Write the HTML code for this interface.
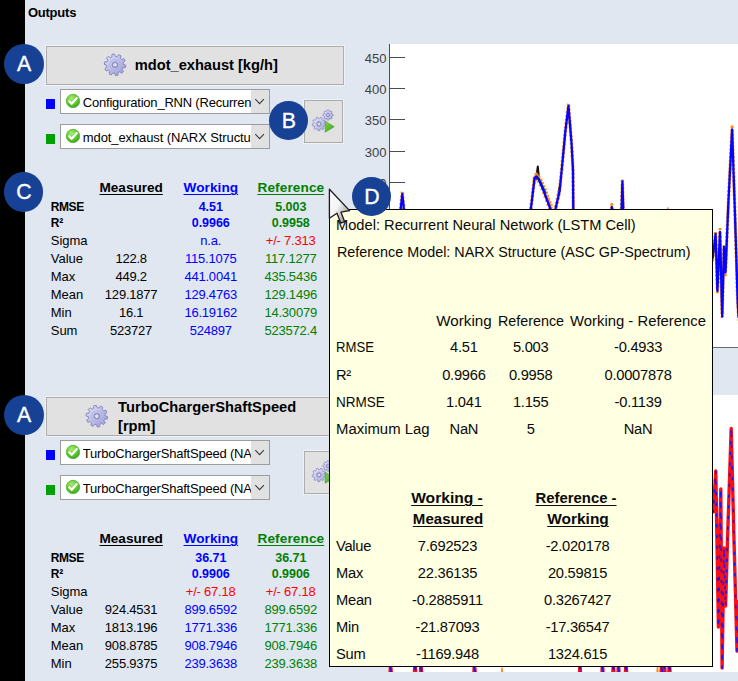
<!DOCTYPE html>
<html><head><meta charset="utf-8"><title>Outputs</title>
<style>
html,body{margin:0;padding:0;}
body{width:738px;height:681px;overflow:hidden;background:#fff;font-family:"Liberation Sans", sans-serif;position:relative;}
#panel{position:absolute;left:25px;top:0;width:713px;height:681px;background:#e0e7f1;}
.abs{position:absolute;}
.btn{position:absolute;box-sizing:border-box;background:#e1e1e1;border:1px solid #adadad;box-shadow:0 0 0 1px rgba(255,255,255,0.45);}
.combo{position:absolute;box-sizing:border-box;background:#fff;border:1px solid #9c9c9c;overflow:hidden;}
.combo .arr{position:absolute;right:0;top:0;width:18px;height:100%;background:#e1e1e1;}
.circle{position:absolute;border-radius:50%;background:#164194;color:#fff;text-align:center;font-weight:700;}
</style></head><body>
<div class="abs" style="left:0;top:0;width:25px;height:681px;background:#000;"></div>
<div id="panel"></div>

<div class="abs" style="left:390px;top:44px;width:348px;height:303px;background:#fff;"></div>
<div class="abs" style="left:389px;top:44px;width:1px;height:304px;background:#4d4d4d;"></div>
<div class="abs" style="left:389px;top:347px;width:349px;height:1px;background:#6a6a6a;"></div>
<div class="abs" style="left:388px;top:395px;width:350px;height:277px;background:#fff;"></div>
<div class="abs" style="left:390px;top:57px;width:15px;height:1px;background:#4d4d4d;"></div>
<div style="position:absolute;top:50px;font-size:13px;line-height:18px;color:#404040;white-space:pre;left:86.50px;width:300px;text-align:right;">450</div>
<div class="abs" style="left:390px;top:88px;width:15px;height:1px;background:#4d4d4d;"></div>
<div style="position:absolute;top:81px;font-size:13px;line-height:18px;color:#404040;white-space:pre;left:86.50px;width:300px;text-align:right;">400</div>
<div class="abs" style="left:390px;top:119px;width:15px;height:1px;background:#4d4d4d;"></div>
<div style="position:absolute;top:112px;font-size:13px;line-height:18px;color:#404040;white-space:pre;left:86.50px;width:300px;text-align:right;">350</div>
<div class="abs" style="left:390px;top:151px;width:15px;height:1px;background:#4d4d4d;"></div>
<div style="position:absolute;top:144px;font-size:13px;line-height:18px;color:#404040;white-space:pre;left:86.50px;width:300px;text-align:right;">300</div>
<div class="abs" style="left:390px;top:182px;width:15px;height:1px;background:#4d4d4d;"></div>
<div style="position:absolute;top:175px;font-size:13px;line-height:18px;color:#404040;white-space:pre;left:86.50px;width:300px;text-align:right;">250</div>
<div style="position:absolute;top:4px;font-size:13px;line-height:18px;color:#000;white-space:pre;font-weight:700;letter-spacing:-0.221px;left:27.90px;">Outputs</div>
<div class="btn" style="left:46px;top:46px;width:298px;height:39px;"></div>
<div class="combo" style="left:60px;top:89px;width:210px;height:25px;"><div class="arr"></div></div>
<div style="position:absolute;top:94px;font-size:13px;line-height:18px;color:#000;white-space:pre;letter-spacing:-0.21px;left:82.80px;width:168.2px;overflow:hidden;">Configuration_RNN (Recurrent</div>
<div class="combo" style="left:60px;top:124px;width:210px;height:25px;"><div class="arr"></div></div>
<div style="position:absolute;top:129px;font-size:13px;line-height:18px;color:#000;white-space:pre;letter-spacing:-0.1px;left:82.80px;width:168.2px;overflow:hidden;">mdot_exhaust (NARX Structure</div>
<div class="abs" style="left:46px;top:99px;width:9px;height:10px;background:#0000ff;"></div>
<div class="abs" style="left:46px;top:134px;width:9px;height:10px;background:#00a000;"></div>
<div class="btn" style="left:304px;top:100px;width:39px;height:43px;"></div>
<div class="btn" style="left:46px;top:397px;width:298px;height:39px;"></div>
<div class="combo" style="left:60px;top:440px;width:210px;height:25px;"><div class="arr"></div></div>
<div style="position:absolute;top:445px;font-size:13px;line-height:18px;color:#000;white-space:pre;letter-spacing:-0.21px;left:82.80px;width:168.2px;overflow:hidden;">TurboChargerShaftSpeed (NARX</div>
<div class="combo" style="left:60px;top:475px;width:210px;height:25px;"><div class="arr"></div></div>
<div style="position:absolute;top:480px;font-size:13px;line-height:18px;color:#000;white-space:pre;letter-spacing:-0.21px;left:82.80px;width:168.2px;overflow:hidden;">TurboChargerShaftSpeed (NARX</div>
<div class="abs" style="left:46px;top:450px;width:9px;height:10px;background:#0000ff;"></div>
<div class="abs" style="left:46px;top:485px;width:9px;height:10px;background:#00a000;"></div>
<div class="btn" style="left:304px;top:451px;width:39px;height:43px;"></div>
<div style="position:absolute;top:55px;font-size:14.67px;line-height:21px;color:#000;white-space:pre;font-weight:700;letter-spacing:-0.02px;left:134.80px;">mdot_exhaust [kg/h]</div>
<div style="position:absolute;top:397px;font-size:14.67px;line-height:21px;color:#000;white-space:pre;font-weight:700;letter-spacing:0.047px;left:118.00px;">TurboChargerShaftSpeed</div>
<div style="position:absolute;top:416px;font-size:14.67px;line-height:21px;color:#000;white-space:pre;font-weight:700;left:118.00px;">[rpm]</div>
<div style="position:absolute;top:178px;font-size:13.6px;line-height:19px;color:#000;white-space:pre;font-weight:700;letter-spacing:-0.013px;text-decoration:underline;text-decoration-thickness:1px;text-underline-offset:1.5px;left:-18.81px;width:300px;text-align:center;">Measured</div>
<div style="position:absolute;top:178px;font-size:13.6px;line-height:19px;color:#0000ff;white-space:pre;font-weight:700;letter-spacing:0.075px;text-decoration:underline;text-decoration-thickness:1px;text-underline-offset:1.5px;left:60.84px;width:300px;text-align:center;">Working</div>
<div style="position:absolute;top:178px;font-size:13.6px;line-height:19px;color:#008000;white-space:pre;font-weight:700;letter-spacing:0.116px;text-decoration:underline;text-decoration-thickness:1px;text-underline-offset:1.5px;left:140.86px;width:300px;text-align:center;">Reference</div>
<div style="position:absolute;top:199px;font-size:12px;line-height:17px;color:#000;white-space:pre;font-weight:700;letter-spacing:-0.423px;left:50.80px;">RMSE</div>
<div style="position:absolute;top:198px;font-size:12.5px;line-height:18px;color:#0000ff;white-space:pre;font-weight:700;letter-spacing:-0.05px;left:60.78px;width:300px;text-align:center;">4.51</div>
<div style="position:absolute;top:198px;font-size:12.5px;line-height:18px;color:#008000;white-space:pre;font-weight:700;letter-spacing:-0.05px;left:140.78px;width:300px;text-align:center;">5.003</div>
<div style="position:absolute;top:215px;font-size:12px;line-height:17px;color:#000;white-space:pre;font-weight:700;letter-spacing:-0.3px;left:50.80px;">R²</div>
<div style="position:absolute;top:214px;font-size:12.5px;line-height:18px;color:#0000ff;white-space:pre;font-weight:700;letter-spacing:-0.05px;left:60.78px;width:300px;text-align:center;">0.9966</div>
<div style="position:absolute;top:214px;font-size:12.5px;line-height:18px;color:#008000;white-space:pre;font-weight:700;letter-spacing:-0.05px;left:140.78px;width:300px;text-align:center;">0.9958</div>
<div style="position:absolute;top:232px;font-size:13px;line-height:18px;color:#000;white-space:pre;letter-spacing:-0.05px;left:50.80px;">Sigma</div>
<div style="position:absolute;top:232px;font-size:13px;line-height:18px;color:#0000ff;white-space:pre;letter-spacing:-0.22px;left:60.69px;width:300px;text-align:center;">n.a.</div>
<div style="position:absolute;top:232px;font-size:13px;line-height:18px;color:#ff0000;white-space:pre;letter-spacing:-0.22px;left:140.69px;width:300px;text-align:center;">+/- 7.313</div>
<div style="position:absolute;top:250px;font-size:13px;line-height:18px;color:#000;white-space:pre;letter-spacing:-0.05px;left:50.80px;">Value</div>
<div style="position:absolute;top:250px;font-size:13px;line-height:18px;color:#000;white-space:pre;letter-spacing:-0.22px;left:-18.91px;width:300px;text-align:center;">122.8</div>
<div style="position:absolute;top:250px;font-size:13px;line-height:18px;color:#0000ff;white-space:pre;letter-spacing:-0.22px;left:60.69px;width:300px;text-align:center;">115.1075</div>
<div style="position:absolute;top:250px;font-size:13px;line-height:18px;color:#008000;white-space:pre;letter-spacing:-0.22px;left:140.69px;width:300px;text-align:center;">117.1277</div>
<div style="position:absolute;top:268px;font-size:13px;line-height:18px;color:#000;white-space:pre;letter-spacing:-0.05px;left:50.80px;">Max</div>
<div style="position:absolute;top:268px;font-size:13px;line-height:18px;color:#000;white-space:pre;letter-spacing:-0.22px;left:-18.91px;width:300px;text-align:center;">449.2</div>
<div style="position:absolute;top:268px;font-size:13px;line-height:18px;color:#0000ff;white-space:pre;letter-spacing:-0.22px;left:60.69px;width:300px;text-align:center;">441.0041</div>
<div style="position:absolute;top:268px;font-size:13px;line-height:18px;color:#008000;white-space:pre;letter-spacing:-0.22px;left:140.69px;width:300px;text-align:center;">435.5436</div>
<div style="position:absolute;top:286px;font-size:13px;line-height:18px;color:#000;white-space:pre;letter-spacing:-0.05px;left:50.80px;">Mean</div>
<div style="position:absolute;top:286px;font-size:13px;line-height:18px;color:#000;white-space:pre;letter-spacing:-0.22px;left:-18.91px;width:300px;text-align:center;">129.1877</div>
<div style="position:absolute;top:286px;font-size:13px;line-height:18px;color:#0000ff;white-space:pre;letter-spacing:-0.22px;left:60.69px;width:300px;text-align:center;">129.4763</div>
<div style="position:absolute;top:286px;font-size:13px;line-height:18px;color:#008000;white-space:pre;letter-spacing:-0.22px;left:140.69px;width:300px;text-align:center;">129.1496</div>
<div style="position:absolute;top:304px;font-size:13px;line-height:18px;color:#000;white-space:pre;letter-spacing:-0.05px;left:50.80px;">Min</div>
<div style="position:absolute;top:304px;font-size:13px;line-height:18px;color:#000;white-space:pre;letter-spacing:-0.22px;left:-18.91px;width:300px;text-align:center;">16.1</div>
<div style="position:absolute;top:304px;font-size:13px;line-height:18px;color:#0000ff;white-space:pre;letter-spacing:-0.22px;left:60.69px;width:300px;text-align:center;">16.19162</div>
<div style="position:absolute;top:304px;font-size:13px;line-height:18px;color:#008000;white-space:pre;letter-spacing:-0.22px;left:140.69px;width:300px;text-align:center;">14.30079</div>
<div style="position:absolute;top:322px;font-size:13px;line-height:18px;color:#000;white-space:pre;letter-spacing:-0.05px;left:50.80px;">Sum</div>
<div style="position:absolute;top:322px;font-size:13px;line-height:18px;color:#000;white-space:pre;letter-spacing:-0.22px;left:-18.91px;width:300px;text-align:center;">523727</div>
<div style="position:absolute;top:322px;font-size:13px;line-height:18px;color:#0000ff;white-space:pre;letter-spacing:-0.22px;left:60.69px;width:300px;text-align:center;">524897</div>
<div style="position:absolute;top:322px;font-size:13px;line-height:18px;color:#008000;white-space:pre;letter-spacing:-0.22px;left:140.69px;width:300px;text-align:center;">523572.4</div>
<div style="position:absolute;top:529px;font-size:13.6px;line-height:19px;color:#000;white-space:pre;font-weight:700;letter-spacing:-0.013px;text-decoration:underline;text-decoration-thickness:1px;text-underline-offset:1.5px;left:-18.81px;width:300px;text-align:center;">Measured</div>
<div style="position:absolute;top:529px;font-size:13.6px;line-height:19px;color:#0000ff;white-space:pre;font-weight:700;letter-spacing:0.075px;text-decoration:underline;text-decoration-thickness:1px;text-underline-offset:1.5px;left:60.84px;width:300px;text-align:center;">Working</div>
<div style="position:absolute;top:529px;font-size:13.6px;line-height:19px;color:#008000;white-space:pre;font-weight:700;letter-spacing:0.116px;text-decoration:underline;text-decoration-thickness:1px;text-underline-offset:1.5px;left:140.86px;width:300px;text-align:center;">Reference</div>
<div style="position:absolute;top:550px;font-size:12px;line-height:17px;color:#000;white-space:pre;font-weight:700;letter-spacing:-0.423px;left:50.80px;">RMSE</div>
<div style="position:absolute;top:549px;font-size:12.5px;line-height:18px;color:#0000ff;white-space:pre;font-weight:700;letter-spacing:-0.05px;left:60.78px;width:300px;text-align:center;">36.71</div>
<div style="position:absolute;top:549px;font-size:12.5px;line-height:18px;color:#008000;white-space:pre;font-weight:700;letter-spacing:-0.05px;left:140.78px;width:300px;text-align:center;">36.71</div>
<div style="position:absolute;top:566px;font-size:12px;line-height:17px;color:#000;white-space:pre;font-weight:700;letter-spacing:-0.3px;left:50.80px;">R²</div>
<div style="position:absolute;top:565px;font-size:12.5px;line-height:18px;color:#0000ff;white-space:pre;font-weight:700;letter-spacing:-0.05px;left:60.78px;width:300px;text-align:center;">0.9906</div>
<div style="position:absolute;top:565px;font-size:12.5px;line-height:18px;color:#008000;white-space:pre;font-weight:700;letter-spacing:-0.05px;left:140.78px;width:300px;text-align:center;">0.9906</div>
<div style="position:absolute;top:583px;font-size:13px;line-height:18px;color:#000;white-space:pre;letter-spacing:-0.05px;left:50.80px;">Sigma</div>
<div style="position:absolute;top:583px;font-size:13px;line-height:18px;color:#ff0000;white-space:pre;letter-spacing:-0.22px;left:60.69px;width:300px;text-align:center;">+/- 67.18</div>
<div style="position:absolute;top:583px;font-size:13px;line-height:18px;color:#ff0000;white-space:pre;letter-spacing:-0.22px;left:140.69px;width:300px;text-align:center;">+/- 67.18</div>
<div style="position:absolute;top:601px;font-size:13px;line-height:18px;color:#000;white-space:pre;letter-spacing:-0.05px;left:50.80px;">Value</div>
<div style="position:absolute;top:601px;font-size:13px;line-height:18px;color:#000;white-space:pre;letter-spacing:-0.22px;left:-18.91px;width:300px;text-align:center;">924.4531</div>
<div style="position:absolute;top:601px;font-size:13px;line-height:18px;color:#0000ff;white-space:pre;letter-spacing:-0.22px;left:60.69px;width:300px;text-align:center;">899.6592</div>
<div style="position:absolute;top:601px;font-size:13px;line-height:18px;color:#008000;white-space:pre;letter-spacing:-0.22px;left:140.69px;width:300px;text-align:center;">899.6592</div>
<div style="position:absolute;top:619px;font-size:13px;line-height:18px;color:#000;white-space:pre;letter-spacing:-0.05px;left:50.80px;">Max</div>
<div style="position:absolute;top:619px;font-size:13px;line-height:18px;color:#000;white-space:pre;letter-spacing:-0.22px;left:-18.91px;width:300px;text-align:center;">1813.196</div>
<div style="position:absolute;top:619px;font-size:13px;line-height:18px;color:#0000ff;white-space:pre;letter-spacing:-0.22px;left:60.69px;width:300px;text-align:center;">1771.336</div>
<div style="position:absolute;top:619px;font-size:13px;line-height:18px;color:#008000;white-space:pre;letter-spacing:-0.22px;left:140.69px;width:300px;text-align:center;">1771.336</div>
<div style="position:absolute;top:637px;font-size:13px;line-height:18px;color:#000;white-space:pre;letter-spacing:-0.05px;left:50.80px;">Mean</div>
<div style="position:absolute;top:637px;font-size:13px;line-height:18px;color:#000;white-space:pre;letter-spacing:-0.22px;left:-18.91px;width:300px;text-align:center;">908.8785</div>
<div style="position:absolute;top:637px;font-size:13px;line-height:18px;color:#0000ff;white-space:pre;letter-spacing:-0.22px;left:60.69px;width:300px;text-align:center;">908.7946</div>
<div style="position:absolute;top:637px;font-size:13px;line-height:18px;color:#008000;white-space:pre;letter-spacing:-0.22px;left:140.69px;width:300px;text-align:center;">908.7946</div>
<div style="position:absolute;top:655px;font-size:13px;line-height:18px;color:#000;white-space:pre;letter-spacing:-0.05px;left:50.80px;">Min</div>
<div style="position:absolute;top:655px;font-size:13px;line-height:18px;color:#000;white-space:pre;letter-spacing:-0.22px;left:-18.91px;width:300px;text-align:center;">255.9375</div>
<div style="position:absolute;top:655px;font-size:13px;line-height:18px;color:#0000ff;white-space:pre;letter-spacing:-0.22px;left:60.69px;width:300px;text-align:center;">239.3638</div>
<div style="position:absolute;top:655px;font-size:13px;line-height:18px;color:#008000;white-space:pre;letter-spacing:-0.22px;left:140.69px;width:300px;text-align:center;">239.3638</div>
<svg class="abs" style="left:0;top:0" width="738" height="681" viewBox="0 0 738 681">
<defs>
<linearGradient id="gg" x1="0" y1="0" x2="1" y2="1"><stop offset="0" stop-color="#e4e4f7"/><stop offset="0.5" stop-color="#bdbde7"/><stop offset="1" stop-color="#9797d0"/></linearGradient>
<linearGradient id="gg2" x1="0" y1="0" x2="1" y2="1"><stop offset="0" stop-color="#f6f6fd"/><stop offset="0.5" stop-color="#cfcfee"/><stop offset="1" stop-color="#a6a6da"/></linearGradient>
<radialGradient id="cg" cx="0.4" cy="0.3" r="0.8"><stop offset="0" stop-color="#a6ec6e"/><stop offset="0.55" stop-color="#5fc832"/><stop offset="1" stop-color="#359a20"/></radialGradient>
<linearGradient id="tg" x1="0" y1="0" x2="1" y2="1"><stop offset="0" stop-color="#7fd84a"/><stop offset="1" stop-color="#3c9e1e"/></linearGradient>
<linearGradient id="cur" x1="0" y1="0" x2="1" y2="1"><stop offset="0" stop-color="#ffffff"/><stop offset="0.45" stop-color="#f4f4f4"/><stop offset="1" stop-color="#7c7c7c"/></linearGradient>
<clipPath id="c1"><rect x="390" y="44" width="348" height="303"/></clipPath>
<clipPath id="c2"><rect x="388" y="395" width="350" height="277"/></clipPath>
</defs>
<g clip-path="url(#c1)" fill="none" stroke-linejoin="round">
<path d="M536,180 L537.8,166.5 L539.3,181" stroke="#111" stroke-width="2"/>
<path d="M558.2,196 L559,187 L560,192" stroke="#111" stroke-width="1.6"/>
<path d="M400.2,215 L401,206 L402.3,194 L403.6,206 L404.2,215" stroke="#ff8c1a" stroke-width="3.2" stroke-dasharray="1.8 2.0" transform="translate(0,-2.6)"/>
<path d="M400.2,215 L401,206 L402.3,194 L403.6,206 L404.2,215" stroke="#ff8c1a" stroke-width="3.0" stroke-dasharray="1.6 2.6" transform="translate(0,2.4)"/>
<path d="M529.8,215 L531,208 L534.6,178 L536.5,176.5 L539,180 L543.7,191 L550.8,210 L553,215 L555.3,210 L559.6,191 L562,167 L565.5,130 L568.5,106 L571.5,143 L573,170 L573.3,215" stroke="#ff8c1a" stroke-width="3.2" stroke-dasharray="1.8 2.0" transform="translate(0,-2.6)"/>
<path d="M529.8,215 L531,208 L534.6,178 L536.5,176.5 L539,180 L543.7,191 L550.8,210 L553,215 L555.3,210 L559.6,191 L562,167 L565.5,130 L568.5,106 L571.5,143 L573,170 L573.3,215" stroke="#ff8c1a" stroke-width="3.0" stroke-dasharray="1.6 2.6" transform="translate(0,2.4)"/>
<path d="M611,215 L611.8,207 L612.6,215" stroke="#ff8c1a" stroke-width="3.2" stroke-dasharray="1.8 2.0" transform="translate(0,-2.6)"/>
<path d="M611,215 L611.8,207 L612.6,215" stroke="#ff8c1a" stroke-width="3.0" stroke-dasharray="1.6 2.6" transform="translate(0,2.4)"/>
<path d="M621.4,215 L622.4,181.5 L623.4,215" stroke="#ff8c1a" stroke-width="3.2" stroke-dasharray="1.8 2.0" transform="translate(0,-2.6)"/>
<path d="M621.4,215 L622.4,181.5 L623.4,215" stroke="#ff8c1a" stroke-width="3.0" stroke-dasharray="1.6 2.6" transform="translate(0,2.4)"/>
<path d="M709,250 L712.7,258 L715.6,234 L717.4,291 L720,232 L722.2,316.5 L724,247 L725.5,272.5 L728.5,200 L732.1,129.5 L735,215 L737.6,300 L738.6,318" stroke="#ff8c1a" stroke-width="3.2" stroke-dasharray="1.8 2.0" transform="translate(0,-2.6)"/>
<path d="M709,250 L712.7,258 L715.6,234 L717.4,291 L720,232 L722.2,316.5 L724,247 L725.5,272.5 L728.5,200 L732.1,129.5 L735,215 L737.6,300 L738.6,318" stroke="#ff8c1a" stroke-width="3.0" stroke-dasharray="1.6 2.6" transform="translate(0,2.4)"/>
<path d="M533.5,180 L536.5,174 L540.5,178.5 L545.5,189.5 L552,207" stroke="#ff8c1a" stroke-width="2.6" stroke-dasharray="1.8 1.6"/>
<path d="M535,179 L537.5,177 L541,182 L546,193" stroke="#1a7a1a" stroke-width="1.4"/>
<circle cx="667.8" cy="208.3" r="1" fill="#ff8c1a"/>
<path d="M400.2,215 L401,206 L402.3,194 L403.6,206 L404.2,215" stroke="#0404ff" stroke-width="2.3"/>
<path d="M529.8,215 L531,208 L534.6,178 L536.5,176.5 L539,180 L543.7,191 L550.8,210 L553,215 L555.3,210 L559.6,191 L562,167 L565.5,130 L568.5,106 L571.5,143 L573,170 L573.3,215" stroke="#0404ff" stroke-width="2.3"/>
<path d="M611,215 L611.8,207 L612.6,215" stroke="#0404ff" stroke-width="2.3"/>
<path d="M621.4,215 L622.4,181.5 L623.4,215" stroke="#0404ff" stroke-width="2.3"/>
<path d="M709,250 L712.7,258 L715.6,234 L717.4,291 L720,232 L722.2,316.5 L724,247 L725.5,272.5 L728.5,200 L732.1,129.5 L735,215 L737.6,300 L738.6,318" stroke="#0404ff" stroke-width="2.3"/>
</g>
<g clip-path="url(#c2)" fill="none" stroke-linejoin="round">
<path d="M501.3,680 L502,668 L502.8,680 M656.5,680 L657.5,666 L658.5,680" stroke="#ff8c1a" stroke-width="1.5"/>
<path d="M709,500 L713.2,512 L715.8,471 L718.4,627 L720.8,489 L722.1,668 L724,548 L725.6,606 L727.5,540 L731.2,428.5 L734,540 L737,651 L739,600" stroke="#f5101a" stroke-width="3.4"/>
<path d="M389.5,680 L390.6,664 L391.8,680" stroke="#f5101a" stroke-width="3.4"/>
<path d="M414,680 L415,663 L416.3,680" stroke="#f5101a" stroke-width="3.4"/>
<path d="M420,680 L421,664 L422.2,680" stroke="#f5101a" stroke-width="3.4"/>
<path d="M473.3,680 L474.5,664 L475.8,680" stroke="#f5101a" stroke-width="3.4"/>
<path d="M579,680 L580,665 L581,680" stroke="#f5101a" stroke-width="3.4"/>
<path d="M601.5,680 L602.5,664 L603.5,680" stroke="#f5101a" stroke-width="3.4"/>
<path d="M612.4,680 L613.4,663 L614.4,680" stroke="#f5101a" stroke-width="3.4"/>
<path d="M617.5,680 L618.5,664 L619.5,680" stroke="#f5101a" stroke-width="3.4"/>
<path d="M625,680 L626,663 L627.2,680" stroke="#f5101a" stroke-width="3.4"/>
<path d="M660.5,680 L661.7,664 L663,680" stroke="#f5101a" stroke-width="3.4"/>
<path d="M663.6,680 L664.6,665 L665.6,680" stroke="#f5101a" stroke-width="3.4"/>
<path d="M668.3,680 L669.4,663 L670.6,680" stroke="#f5101a" stroke-width="3.4"/>
<path d="M709,500 L713.2,512 L715.8,471 L718.4,627 L720.8,489 L722.1,668 L724,548 L725.6,606 L727.5,540 L731.2,428.5 L734,540 L737,651 L739,600" stroke="#1414ff" stroke-width="1.6" stroke-dasharray="3.2 7.5"/>
<path d="M389.5,680 L390.6,664 L391.8,680" stroke="#1414ff" stroke-width="1.6" stroke-dasharray="3.2 7.5"/>
<path d="M414,680 L415,663 L416.3,680" stroke="#1414ff" stroke-width="1.6" stroke-dasharray="3.2 7.5"/>
<path d="M420,680 L421,664 L422.2,680" stroke="#1414ff" stroke-width="1.6" stroke-dasharray="3.2 7.5"/>
<path d="M473.3,680 L474.5,664 L475.8,680" stroke="#1414ff" stroke-width="1.6" stroke-dasharray="3.2 7.5"/>
<path d="M579,680 L580,665 L581,680" stroke="#1414ff" stroke-width="1.6" stroke-dasharray="3.2 7.5"/>
<path d="M601.5,680 L602.5,664 L603.5,680" stroke="#1414ff" stroke-width="1.6" stroke-dasharray="3.2 7.5"/>
<path d="M612.4,680 L613.4,663 L614.4,680" stroke="#1414ff" stroke-width="1.6" stroke-dasharray="3.2 7.5"/>
<path d="M617.5,680 L618.5,664 L619.5,680" stroke="#1414ff" stroke-width="1.6" stroke-dasharray="3.2 7.5"/>
<path d="M625,680 L626,663 L627.2,680" stroke="#1414ff" stroke-width="1.6" stroke-dasharray="3.2 7.5"/>
<path d="M660.5,680 L661.7,664 L663,680" stroke="#1414ff" stroke-width="1.6" stroke-dasharray="3.2 7.5"/>
<path d="M663.6,680 L664.6,665 L665.6,680" stroke="#1414ff" stroke-width="1.6" stroke-dasharray="3.2 7.5"/>
<path d="M668.3,680 L669.4,663 L670.6,680" stroke="#1414ff" stroke-width="1.6" stroke-dasharray="3.2 7.5"/>
</g>
<path d="M123.39,64.32 L125.79,65.13 L125.41,67.67 L122.87,67.74 L122.07,69.34 L123.54,71.41 L121.73,73.24 L119.64,71.80 L118.05,72.63 L118.02,75.17 L115.48,75.59 L114.64,73.19 L112.87,72.92 L111.35,74.96 L109.05,73.81 L109.77,71.38 L108.50,70.12 L106.07,70.88 L104.89,68.59 L106.91,67.05 L106.61,65.28 L104.21,64.47 L104.59,61.93 L107.13,61.86 L107.93,60.26 L106.46,58.19 L108.27,56.36 L110.36,57.80 L111.95,56.97 L111.98,54.43 L114.52,54.01 L115.36,56.41 L117.13,56.68 L118.65,54.64 L120.95,55.79 L120.23,58.22 L121.50,59.48 L123.93,58.72 L125.11,61.01 L123.09,62.55Z M117.40,64.80 A2.4,2.4 0 1,0 112.60,64.80 A2.4,2.4 0 1,0 117.40,64.80Z" fill="url(#gg)" fill-rule="evenodd" stroke="#8888c6" stroke-width="1.0" stroke-linejoin="round"/><circle cx="115" cy="64.8" r="5.21" fill="none" stroke="#b4b4e2" stroke-width="1.10" opacity="0.9"/><circle cx="115" cy="64.8" r="2.80" fill="none" stroke="#8f8fcc" stroke-width="1.0"/>
<path d="M105.19,415.72 L107.59,416.53 L107.21,419.07 L104.67,419.14 L103.87,420.74 L105.34,422.81 L103.53,424.64 L101.44,423.20 L99.85,424.03 L99.82,426.57 L97.28,426.99 L96.44,424.59 L94.67,424.32 L93.15,426.36 L90.85,425.21 L91.57,422.78 L90.30,421.52 L87.87,422.28 L86.69,419.99 L88.71,418.45 L88.41,416.68 L86.01,415.87 L86.39,413.33 L88.93,413.26 L89.73,411.66 L88.26,409.59 L90.07,407.76 L92.16,409.20 L93.75,408.37 L93.78,405.83 L96.32,405.41 L97.16,407.81 L98.93,408.08 L100.45,406.04 L102.75,407.19 L102.03,409.62 L103.30,410.88 L105.73,410.12 L106.91,412.41 L104.89,413.95Z M99.20,416.20 A2.4,2.4 0 1,0 94.40,416.20 A2.4,2.4 0 1,0 99.20,416.20Z" fill="url(#gg)" fill-rule="evenodd" stroke="#8888c6" stroke-width="1.0" stroke-linejoin="round"/><circle cx="96.8" cy="416.2" r="5.21" fill="none" stroke="#b4b4e2" stroke-width="1.10" opacity="0.9"/><circle cx="96.8" cy="416.2" r="2.80" fill="none" stroke="#8f8fcc" stroke-width="1.0"/>
<circle cx="73" cy="101" r="6.7" fill="url(#cg)" stroke="#52b030" stroke-width="0.8"/><path d="M69.30,101.30 L71.70,103.80 L76.80,98.10" fill="none" stroke="#fff" stroke-width="2.2" stroke-linecap="round" stroke-linejoin="round"/>
<circle cx="73" cy="136" r="6.7" fill="url(#cg)" stroke="#52b030" stroke-width="0.8"/><path d="M69.30,136.30 L71.70,138.80 L76.80,133.10" fill="none" stroke="#fff" stroke-width="2.2" stroke-linecap="round" stroke-linejoin="round"/>
<circle cx="73" cy="452" r="6.7" fill="url(#cg)" stroke="#52b030" stroke-width="0.8"/><path d="M69.30,452.30 L71.70,454.80 L76.80,449.10" fill="none" stroke="#fff" stroke-width="2.2" stroke-linecap="round" stroke-linejoin="round"/>
<circle cx="73" cy="487" r="6.7" fill="url(#cg)" stroke="#52b030" stroke-width="0.8"/><path d="M69.30,487.30 L71.70,489.80 L76.80,484.10" fill="none" stroke="#fff" stroke-width="2.2" stroke-linecap="round" stroke-linejoin="round"/>
<path d="M255.3,99.2 L259.6,103.7 L263.9,99.2" fill="none" stroke="#3c3c3c" stroke-width="1.1"/>
<path d="M255.3,134.2 L259.6,138.7 L263.9,134.2" fill="none" stroke="#3c3c3c" stroke-width="1.1"/>
<path d="M255.3,450.2 L259.6,454.7 L263.9,450.2" fill="none" stroke="#3c3c3c" stroke-width="1.1"/>
<path d="M255.3,485.2 L259.6,489.7 L263.9,485.2" fill="none" stroke="#3c3c3c" stroke-width="1.1"/>
<path d="M331.77,114.00 L333.14,114.23 L333.14,115.77 L331.77,116.00 L331.37,116.96 L332.18,118.09 L331.09,119.18 L329.96,118.37 L329.00,118.77 L328.77,120.14 L327.23,120.14 L327.00,118.77 L326.04,118.37 L324.91,119.18 L323.82,118.09 L324.63,116.96 L324.23,116.00 L322.86,115.77 L322.86,114.23 L324.23,114.00 L324.63,113.04 L323.82,111.91 L324.91,110.82 L326.04,111.63 L327.00,111.23 L327.23,109.86 L328.77,109.86 L329.00,111.23 L329.96,111.63 L331.09,110.82 L332.18,111.91 L331.37,113.04Z M329.40,115.00 A1.4,1.4 0 1,0 326.60,115.00 A1.4,1.4 0 1,0 329.40,115.00Z" fill="url(#gg2)" fill-rule="evenodd" stroke="#8888c6" stroke-width="0.8" stroke-linejoin="round"/><circle cx="328.0" cy="115" r="2.42" fill="none" stroke="#b4b4e2" stroke-width="0.88" opacity="0.9"/><circle cx="328.0" cy="115" r="1.80" fill="none" stroke="#8f8fcc" stroke-width="0.8"/>
<path d="M324.10,123.75 L325.78,124.36 L325.43,126.12 L323.63,126.03 L323.00,127.06 L323.90,128.61 L322.50,129.73 L321.18,128.51 L320.04,128.89 L319.73,130.66 L317.93,130.62 L317.71,128.83 L316.59,128.39 L315.21,129.55 L313.86,128.36 L314.84,126.85 L314.26,125.79 L312.47,125.79 L312.20,124.01 L313.92,123.49 L314.16,122.30 L312.78,121.15 L313.72,119.62 L315.37,120.32 L316.32,119.56 L316.00,117.80 L317.71,117.22 L318.53,118.82 L319.73,118.85 L320.63,117.30 L322.30,117.96 L321.90,119.70 L322.81,120.50 L324.49,119.89 L325.35,121.47 L323.92,122.55Z M320.80,123.90 A1.8,1.8 0 1,0 317.20,123.90 A1.8,1.8 0 1,0 320.80,123.90Z" fill="url(#gg2)" fill-rule="evenodd" stroke="#8888c6" stroke-width="0.8" stroke-linejoin="round"/><circle cx="319.0" cy="123.9" r="3.16" fill="none" stroke="#b4b4e2" stroke-width="0.88" opacity="0.9"/><circle cx="319.0" cy="123.9" r="2.20" fill="none" stroke="#8f8fcc" stroke-width="0.8"/>
<path d="M325.2,121.2 L334.2,126.7 L325.2,132.2Z" fill="url(#tg)" stroke="#3d9a22" stroke-width="0.6"/>
<path d="M331.77,465.00 L333.14,465.23 L333.14,466.77 L331.77,467.00 L331.37,467.96 L332.18,469.09 L331.09,470.18 L329.96,469.37 L329.00,469.77 L328.77,471.14 L327.23,471.14 L327.00,469.77 L326.04,469.37 L324.91,470.18 L323.82,469.09 L324.63,467.96 L324.23,467.00 L322.86,466.77 L322.86,465.23 L324.23,465.00 L324.63,464.04 L323.82,462.91 L324.91,461.82 L326.04,462.63 L327.00,462.23 L327.23,460.86 L328.77,460.86 L329.00,462.23 L329.96,462.63 L331.09,461.82 L332.18,462.91 L331.37,464.04Z M329.40,466.00 A1.4,1.4 0 1,0 326.60,466.00 A1.4,1.4 0 1,0 329.40,466.00Z" fill="url(#gg2)" fill-rule="evenodd" stroke="#8888c6" stroke-width="0.8" stroke-linejoin="round"/><circle cx="328.0" cy="466" r="2.42" fill="none" stroke="#b4b4e2" stroke-width="0.88" opacity="0.9"/><circle cx="328.0" cy="466" r="1.80" fill="none" stroke="#8f8fcc" stroke-width="0.8"/>
<path d="M324.10,474.75 L325.78,475.36 L325.43,477.12 L323.63,477.03 L323.00,478.06 L323.90,479.61 L322.50,480.73 L321.18,479.51 L320.04,479.89 L319.73,481.66 L317.93,481.62 L317.71,479.83 L316.59,479.39 L315.21,480.55 L313.86,479.36 L314.84,477.85 L314.26,476.79 L312.47,476.79 L312.20,475.01 L313.92,474.49 L314.16,473.30 L312.78,472.15 L313.72,470.62 L315.37,471.32 L316.32,470.56 L316.00,468.80 L317.71,468.22 L318.53,469.82 L319.73,469.85 L320.63,468.30 L322.30,468.96 L321.90,470.70 L322.81,471.50 L324.49,470.89 L325.35,472.47 L323.92,473.55Z M320.80,474.90 A1.8,1.8 0 1,0 317.20,474.90 A1.8,1.8 0 1,0 320.80,474.90Z" fill="url(#gg2)" fill-rule="evenodd" stroke="#8888c6" stroke-width="0.8" stroke-linejoin="round"/><circle cx="319.0" cy="474.9" r="3.16" fill="none" stroke="#b4b4e2" stroke-width="0.88" opacity="0.9"/><circle cx="319.0" cy="474.9" r="2.20" fill="none" stroke="#8f8fcc" stroke-width="0.8"/>
<path d="M325.2,472.2 L334.2,477.7 L325.2,483.2Z" fill="url(#tg)" stroke="#3d9a22" stroke-width="0.6"/>
</svg>
<div class="abs" style="left:329px;top:209px;width:384px;height:458px;box-sizing:border-box;background:#ffffe1;border:1px solid #000;"></div>
<div style="position:absolute;top:215px;font-size:14.7px;line-height:21px;color:#0a0a0a;white-space:pre;left:336.20px;transform:scaleX(0.9976);transform-origin:0 0;">Model: Recurrent Neural Network (LSTM Cell)</div>
<div style="position:absolute;top:242px;font-size:14.7px;line-height:21px;color:#0a0a0a;white-space:pre;left:336.60px;transform:scaleX(0.9776);transform-origin:0 0;">Reference Model: NARX Structure (ASC GP-Spectrum)</div>
<div style="position:absolute;top:311px;font-size:14.7px;line-height:21px;color:#0a0a0a;white-space:pre;left:314.00px;width:300px;text-align:center;transform:scaleX(1.0327);transform-origin:50% 0;">Working</div>
<div style="position:absolute;top:311px;font-size:14.7px;line-height:21px;color:#0a0a0a;white-space:pre;left:380.80px;width:300px;text-align:center;transform:scaleX(0.9761);transform-origin:50% 0;">Reference</div>
<div style="position:absolute;top:311px;font-size:14.7px;line-height:21px;color:#0a0a0a;white-space:pre;left:488.20px;width:300px;text-align:center;transform:scaleX(1.0109);transform-origin:50% 0;">Working - Reference</div>
<div style="position:absolute;top:337px;font-size:14.7px;line-height:21px;color:#0a0a0a;white-space:pre;left:336.10px;transform:scaleX(0.8947);transform-origin:0 0;">RMSE</div>
<div style="position:absolute;top:337px;font-size:14.7px;line-height:21px;color:#0a0a0a;white-space:pre;letter-spacing:-0.25px;left:313.88px;width:300px;text-align:center;">4.51</div>
<div style="position:absolute;top:337px;font-size:14.7px;line-height:21px;color:#0a0a0a;white-space:pre;letter-spacing:-0.25px;left:380.67px;width:300px;text-align:center;">5.003</div>
<div style="position:absolute;top:337px;font-size:14.7px;line-height:21px;color:#0a0a0a;white-space:pre;letter-spacing:-0.25px;left:488.08px;width:300px;text-align:center;">-0.4933</div>
<div style="position:absolute;top:365px;font-size:14.7px;line-height:21px;color:#0a0a0a;white-space:pre;letter-spacing:-0.5px;left:336.10px;">R²</div>
<div style="position:absolute;top:365px;font-size:14.7px;line-height:21px;color:#0a0a0a;white-space:pre;letter-spacing:-0.25px;left:313.88px;width:300px;text-align:center;">0.9966</div>
<div style="position:absolute;top:365px;font-size:14.7px;line-height:21px;color:#0a0a0a;white-space:pre;letter-spacing:-0.25px;left:380.67px;width:300px;text-align:center;">0.9958</div>
<div style="position:absolute;top:365px;font-size:14.7px;line-height:21px;color:#0a0a0a;white-space:pre;letter-spacing:-0.25px;left:488.08px;width:300px;text-align:center;">0.0007878</div>
<div style="position:absolute;top:392px;font-size:14.7px;line-height:21px;color:#0a0a0a;white-space:pre;left:336.10px;transform:scaleX(0.9211);transform-origin:0 0;">NRMSE</div>
<div style="position:absolute;top:392px;font-size:14.7px;line-height:21px;color:#0a0a0a;white-space:pre;letter-spacing:-0.25px;left:313.88px;width:300px;text-align:center;">1.041</div>
<div style="position:absolute;top:392px;font-size:14.7px;line-height:21px;color:#0a0a0a;white-space:pre;letter-spacing:-0.25px;left:380.67px;width:300px;text-align:center;">1.155</div>
<div style="position:absolute;top:392px;font-size:14.7px;line-height:21px;color:#0a0a0a;white-space:pre;letter-spacing:-0.25px;left:488.08px;width:300px;text-align:center;">-0.1139</div>
<div style="position:absolute;top:419px;font-size:14.7px;line-height:21px;color:#0a0a0a;white-space:pre;left:336.10px;transform:scaleX(1.0139);transform-origin:0 0;">Maximum Lag</div>
<div style="position:absolute;top:419px;font-size:14.7px;line-height:21px;color:#0a0a0a;white-space:pre;letter-spacing:-0.25px;left:313.88px;width:300px;text-align:center;">NaN</div>
<div style="position:absolute;top:419px;font-size:14.7px;line-height:21px;color:#0a0a0a;white-space:pre;letter-spacing:-0.25px;left:380.67px;width:300px;text-align:center;">5</div>
<div style="position:absolute;top:419px;font-size:14.7px;line-height:21px;color:#0a0a0a;white-space:pre;letter-spacing:-0.25px;left:488.08px;width:300px;text-align:center;">NaN</div>
<div style="position:absolute;top:488px;font-size:14.7px;line-height:21px;color:#0a0a0a;white-space:pre;font-weight:700;text-decoration:underline;text-decoration-thickness:1px;text-underline-offset:2px;left:296.50px;width:300px;text-align:center;transform:scaleX(1.0621);transform-origin:50% 0;">Working -</div>
<div style="position:absolute;top:509px;font-size:14.7px;line-height:21px;color:#0a0a0a;white-space:pre;font-weight:700;text-decoration:underline;text-decoration-thickness:1px;text-underline-offset:2px;left:298.00px;width:300px;text-align:center;transform:scaleX(1.0244);transform-origin:50% 0;">Measured</div>
<div style="position:absolute;top:488px;font-size:14.7px;line-height:21px;color:#0a0a0a;white-space:pre;font-weight:700;text-decoration:underline;text-decoration-thickness:1px;text-underline-offset:2px;left:426.20px;width:300px;text-align:center;transform:scaleX(1.0129);transform-origin:50% 0;">Reference -</div>
<div style="position:absolute;top:509px;font-size:14.7px;line-height:21px;color:#0a0a0a;white-space:pre;font-weight:700;text-decoration:underline;text-decoration-thickness:1px;text-underline-offset:2px;left:428.00px;width:300px;text-align:center;transform:scaleX(1.0525);transform-origin:50% 0;">Working</div>
<div style="position:absolute;top:536px;font-size:14.7px;line-height:21px;color:#0a0a0a;white-space:pre;letter-spacing:-0.3px;left:336.10px;">Value</div>
<div style="position:absolute;top:536px;font-size:14.7px;line-height:21px;color:#0a0a0a;white-space:pre;letter-spacing:-0.25px;left:297.48px;width:300px;text-align:center;">7.692523</div>
<div style="position:absolute;top:536px;font-size:14.7px;line-height:21px;color:#0a0a0a;white-space:pre;letter-spacing:-0.25px;left:427.58px;width:300px;text-align:center;">-2.020178</div>
<div style="position:absolute;top:563px;font-size:14.7px;line-height:21px;color:#0a0a0a;white-space:pre;letter-spacing:-0.3px;left:336.10px;">Max</div>
<div style="position:absolute;top:563px;font-size:14.7px;line-height:21px;color:#0a0a0a;white-space:pre;letter-spacing:-0.25px;left:297.48px;width:300px;text-align:center;">22.36135</div>
<div style="position:absolute;top:563px;font-size:14.7px;line-height:21px;color:#0a0a0a;white-space:pre;letter-spacing:-0.25px;left:427.58px;width:300px;text-align:center;">20.59815</div>
<div style="position:absolute;top:590px;font-size:14.7px;line-height:21px;color:#0a0a0a;white-space:pre;letter-spacing:-0.3px;left:336.10px;">Mean</div>
<div style="position:absolute;top:590px;font-size:14.7px;line-height:21px;color:#0a0a0a;white-space:pre;letter-spacing:-0.25px;left:297.48px;width:300px;text-align:center;">-0.2885911</div>
<div style="position:absolute;top:590px;font-size:14.7px;line-height:21px;color:#0a0a0a;white-space:pre;letter-spacing:-0.25px;left:427.58px;width:300px;text-align:center;">0.3267427</div>
<div style="position:absolute;top:617px;font-size:14.7px;line-height:21px;color:#0a0a0a;white-space:pre;letter-spacing:-0.3px;left:336.10px;">Min</div>
<div style="position:absolute;top:617px;font-size:14.7px;line-height:21px;color:#0a0a0a;white-space:pre;letter-spacing:-0.25px;left:297.48px;width:300px;text-align:center;">-21.87093</div>
<div style="position:absolute;top:617px;font-size:14.7px;line-height:21px;color:#0a0a0a;white-space:pre;letter-spacing:-0.25px;left:427.58px;width:300px;text-align:center;">-17.36547</div>
<div style="position:absolute;top:644px;font-size:14.7px;line-height:21px;color:#0a0a0a;white-space:pre;letter-spacing:-0.3px;left:336.10px;">Sum</div>
<div style="position:absolute;top:644px;font-size:14.7px;line-height:21px;color:#0a0a0a;white-space:pre;letter-spacing:-0.25px;left:297.48px;width:300px;text-align:center;">-1169.948</div>
<div style="position:absolute;top:644px;font-size:14.7px;line-height:21px;color:#0a0a0a;white-space:pre;letter-spacing:-0.25px;left:427.58px;width:300px;text-align:center;">1324.615</div>
<div class="circle" style="left:4.00px;top:44.10px;width:39.8px;height:39.8px;"></div>
<div style="position:absolute;top:49px;font-size:21.3px;line-height:30px;color:#fff;white-space:pre;left:-125.90px;width:300px;text-align:center;-webkit-text-stroke:0.35px #fff;">A</div>
<div class="circle" style="left:269.25px;top:101.30px;width:38.9px;height:38.9px;"></div>
<div style="position:absolute;top:106px;font-size:21.3px;line-height:30px;color:#fff;white-space:pre;left:138.90px;width:300px;text-align:center;-webkit-text-stroke:0.35px #fff;">B</div>
<div class="circle" style="left:4.00px;top:172.35px;width:39.3px;height:39.3px;"></div>
<div style="position:absolute;top:177px;font-size:21.3px;line-height:30px;color:#fff;white-space:pre;left:-126.15px;width:300px;text-align:center;-webkit-text-stroke:0.35px #fff;">C</div>
<div class="circle" style="left:352.25px;top:177.25px;width:38.9px;height:38.9px;"></div>
<div style="position:absolute;top:182px;font-size:21.3px;line-height:30px;color:#fff;white-space:pre;left:221.90px;width:300px;text-align:center;-webkit-text-stroke:0.35px #fff;">D</div>
<div class="circle" style="left:4.00px;top:395.10px;width:39.8px;height:39.8px;"></div>
<div style="position:absolute;top:400px;font-size:21.3px;line-height:30px;color:#fff;white-space:pre;left:-125.90px;width:300px;text-align:center;-webkit-text-stroke:0.35px #fff;">A</div>
<svg class="abs" style="left:0;top:0" width="738" height="681" viewBox="0 0 738 681">
<path d="M329.4,189.3 L329.4,218.2 L337.0,213.2 L340.8,223.2 L344.6,221.6 L341.0,212.2 L349.6,210.6 Z" fill="url(#cur)" stroke="#1a1a1a" stroke-width="1.3" stroke-linejoin="round"/>
</svg>
</body></html>
